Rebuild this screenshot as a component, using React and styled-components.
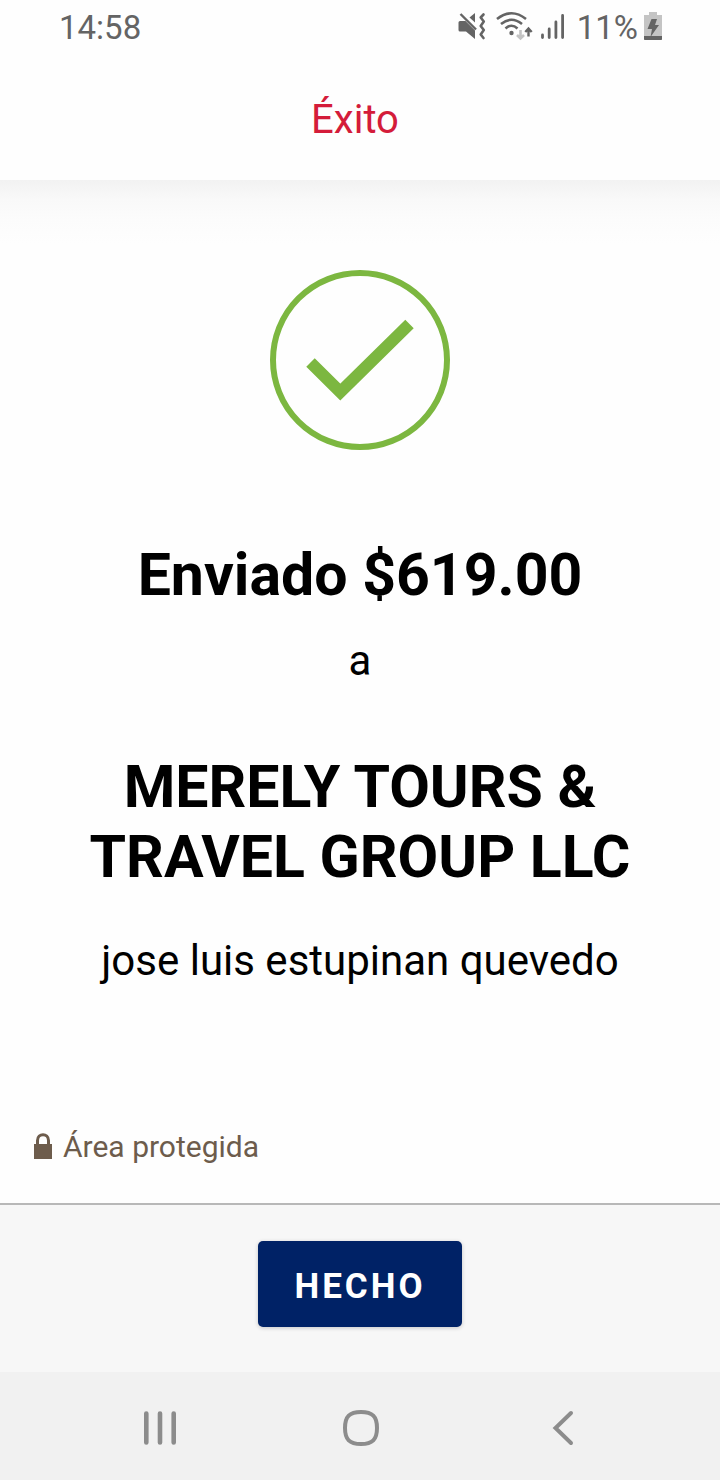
import React from 'react'
import styled, { createGlobalStyle } from 'styled-components'

const App = () => {
  return (
    <Page>
      <GlobalStyle />
      <StatusBar>
        <StatusText>14:58</StatusText>
        <StatusIcons>
          <MuteIcon />
          <WifiIcon />
          <SignalIcon />
          <StatusText>11%</StatusText>
          <BatteryIcon />
        </StatusIcons>
      </StatusBar>
      <Header>
        <Title>Éxito</Title>
      </Header>
      <Content>
        <CheckIcon />
        <Amount>Enviado $619.00</Amount>
        <Text>a</Text>
        <Recipient>MERELY TOURS &amp; TRAVEL GROUP LLC</Recipient>
        <Text>jose luis estupinan quevedo</Text>
        <Secure>
          <LockIcon />
          <span>Área protegida</span>
        </Secure>
      </Content>
      <Footer>
        <DoneButton type='button'>HECHO</DoneButton>
      </Footer>
      <NavBar>
        <NavButton type='button' aria-label='Recientes'>
          <svg width='40' height='40' viewBox='0 0 40 40' stroke='#8c8c8c' strokeWidth='4.6' strokeLinecap='round'>
            <path d='M6.3 5.5v29M20 5.5v29M33.7 5.5v29' />
          </svg>
        </NavButton>
        <NavButton type='button' aria-label='Inicio'>
          <svg width='40' height='40' viewBox='0 0 40 40' fill='none' stroke='#8c8c8c' strokeWidth='4'>
            <path d='M20 4C31.5 4 36 8.5 36 20C36 31.5 31.5 36 20 36C8.5 36 4 31.5 4 20C4 8.5 8.5 4 20 4Z' />
          </svg>
        </NavButton>
        <NavButton type='button' aria-label='Atrás'>
          <svg width='40' height='40' viewBox='0 0 40 40' fill='none' stroke='#8c8c8c' strokeWidth='4' strokeLinecap='round'>
            <path d='M29 5L13.5 20L29 35' />
          </svg>
        </NavButton>
      </NavBar>
    </Page>
  )
}

const MuteIcon = () => (
  <svg width='34' height='32' viewBox='0 0 34 32'>
    <path d='M1.5 12.5Q1.5 11 3 11H8.5L18 20.5V29L9 21.5H3Q1.5 21.5 1.5 20Z' fill='#646464' />
    <path d='M18 3V12.5L12.5 7.5Z' fill='#646464' />
    <path d='M3.5 4L19 19.5' stroke='#646464' strokeWidth='2.4' />
    <path d='M26.5 4.5L23.7 7.5L26.8 11.5L23.7 16L26.8 20L23.7 24.5L26.5 28' fill='none' stroke='#646464' strokeWidth='2.6' strokeLinejoin='round' strokeLinecap='round' />
  </svg>
)

const WifiIcon = () => (
  <svg width='38' height='32' viewBox='0 0 38 32' fill='none' strokeWidth='2.6'>
    <path d='M1 9Q15.5 -2.5 30 9' stroke='#646464' />
    <path d='M5 14Q15.5 5.5 26 14' stroke='#646464' />
    <path d='M9.5 18.5Q15.5 13 21.5 18.5' stroke='#646464' />
    <circle cx='15.5' cy='23' r='2.2' fill='#646464' />
    <path d='M24.5 20V28M21 25L24.5 28.5L28 25' stroke='#c4c4c4' />
    <path d='M32.5 26.5V19.5M29.3 22L32.5 18.5L35.7 22' stroke='#646464' strokeWidth='2.4' />
  </svg>
)

const SignalIcon = () => (
  <svg width='33' height='32' viewBox='0 0 33 32' stroke='#646464' strokeWidth='2.8' strokeLinecap='round'>
    <path d='M3.5 25V27.5M10.2 19V27.5M16.9 12V27.5M23.6 5.5V27.5' />
  </svg>
)

const BatteryIcon = () => (
  <svg width='20' height='32' viewBox='0 0 20 32'>
    <path d='M6 2H14V5H19V30H1V5H6Z' fill='#c4c4c4' />
    <path d='M1 26H19V29Q19 30 18 30H2Q1 30 1 29Z' fill='#646464' />
    <path d='M8.5 9H14L12 15H16L7.5 27L9 19H4.5Z' fill='#646464' />
  </svg>
)

const CheckIcon = () => (
  <svg width='180' height='180' viewBox='0 0 180 180' fill='none' stroke='#7cb740'>
    <circle cx='90' cy='90' r='87' strokeWidth='6' />
    <path d='M40.5 92.5L70.3 122L139.5 54' strokeWidth='12' />
  </svg>
)

const LockIcon = () => (
  <svg width='20' height='28' viewBox='0 0 20 28'>
    <path d='M4.5 12V7.5C4.5 -0.2 15.5 -0.2 15.5 7.5V12' fill='none' stroke='#6d5c4c' strokeWidth='3' />
    <path d='M1 11H19V26H1Z' fill='#6d5c4c' />
  </svg>
)

const GlobalStyle = createGlobalStyle`
  * {
    box-sizing: border-box;
  }
  body {
    margin: 0;
    background: #fefefe;
    font-family: Roboto, sans-serif;
  }
`

const Page = styled.div`
  display: flex;
  flex-direction: column;
  min-height: 100vh;
`

const StatusBar = styled.div`
  display: flex;
  align-items: center;
  justify-content: space-between;
  height: 56px;
  padding: 0 57px 4px 59px;
`

const StatusIcons = styled.div`
  display: flex;
  align-items: center;
  gap: 5px;
`

const StatusText = styled.span`
  padding-top: 3px;
  color: #646464;
  font-size: 33px;
  line-height: 40px;
`

const Header = styled.header`
  display: flex;
  align-items: center;
  justify-content: center;
  height: 124px;
  padding: 4px 10px 0 0;
`

const Title = styled.h1`
  margin: 0;
  color: #d41c3a;
  font-size: 40px;
  font-weight: 400;
  line-height: 48px;
`

const Content = styled.main`
  display: flex;
  flex: 1;
  flex-direction: column;
  align-items: center;
  padding: 90px 33px 36px;
  background: linear-gradient(#f2f2f2, #f9f9f9 20px, #fcfcfc 40px, #fefefe 64px);
  color: #000;
  text-align: center;
`

const Amount = styled.h2`
  margin: 90px 0 0;
  font-size: 59px;
  font-weight: 700;
  line-height: 70px;
`

const Text = styled.p`
  margin: 27px 0 0;
  font-size: 42px;
  line-height: 48px;
`

const Recipient = styled.h2`
  max-width: 600px;
  margin: 67px 0 18px;
  font-size: 59px;
  font-weight: 700;
  line-height: 70px;
`

const Secure = styled.div`
  display: flex;
  align-items: center;
  align-self: flex-start;
  gap: 10px;
  margin-top: auto;
  color: #6d5c4c;
  font-size: 30px;
  line-height: 40px;
`

const Footer = styled.footer`
  display: flex;
  align-items: flex-start;
  justify-content: center;
  height: 169px;
  padding-top: 36px;
  border-top: 2px solid #b8b8b8;
  background: #f7f7f7;
`

const DoneButton = styled.button`
  padding: 25px 36px 19px;
  border: 0;
  border-radius: 5px;
  background: #002266;
  box-shadow: 0 1px 4px rgba(0, 0, 0, 0.2);
  color: #fff;
  font-family: inherit;
  font-size: 35px;
  font-weight: 700;
  line-height: 42px;
  letter-spacing: 3px;
  cursor: pointer;
`

const NavBar = styled.nav`
  display: flex;
  justify-content: center;
  height: 108px;
  padding: 0 58px 0 60px;
  background: #f1f1f1;
`

const NavButton = styled.button`
  display: flex;
  flex: 1;
  align-items: center;
  justify-content: center;
  padding: 4px 0 0;
  border: 0;
  background: none;
  cursor: pointer;
`

export default App
